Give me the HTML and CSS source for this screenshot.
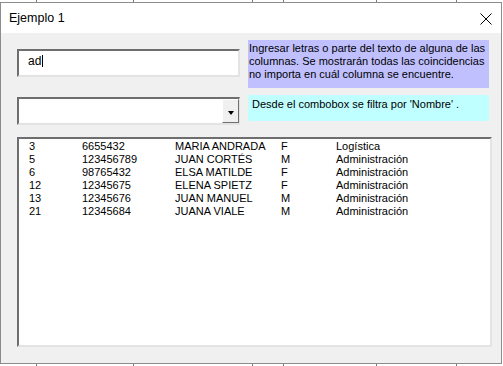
FILE: index.html
```html
<html>
<head>
<meta charset="utf-8">
<link rel="stylesheet" href="styles.css">
</head>
<body>
<div class="win">
  <div class="titlebar">
    <span class="title">Ejemplo 1</span>
    <svg class="close" width="12" height="12" viewBox="0 0 12 12">
      <path d="M0.5 0.5 L11.5 11.5 M11.5 0.5 L0.5 11.5" stroke="#000" stroke-width="1" fill="none"/>
    </svg>
  </div>
  <div class="client">
    <div class="row row1">
      <div class="textbox">ad<span class="caret"></span></div>
      <div class="note purple">Ingresar letras o parte del texto de alguna de las<br>columnas. Se mostrarán todas las coincidencias<br>no importa en cuál columna se encuentre.</div>
    </div>
    <div class="row row2">
      <div class="combo">
        <div class="combo-field"></div>
        <div class="combo-btn"><span class="arrow"></span></div>
      </div>
      <div class="note cyan">Desde el combobox se filtra por 'Nombre' .</div>
    </div>
    <div class="listbox">
      <div class="item"><span>3</span><span>6655432</span><span>MARIA ANDRADA</span><span>F</span><span>Logística</span></div>
      <div class="item"><span>5</span><span>123456789</span><span>JUAN CORTÉS</span><span>M</span><span>Administración</span></div>
      <div class="item"><span>6</span><span>98765432</span><span>ELSA MATILDE</span><span>F</span><span>Administración</span></div>
      <div class="item"><span>12</span><span>12345675</span><span>ELENA SPIETZ</span><span>F</span><span>Administración</span></div>
      <div class="item"><span>13</span><span>12345676</span><span>JUAN MANUEL</span><span>M</span><span>Administración</span></div>
      <div class="item"><span>21</span><span>12345684</span><span>JUANA VIALE</span><span>M</span><span>Administración</span></div>
    </div>
  </div>
</div>
</body>
</html>
```

FILE: styles.css
```css
body{
  margin:0;
  padding:2px 0 0 0;
  width:503px;
  height:366px;
  box-sizing:border-box;
  overflow:hidden;
  background-color:#fff;
  background-image:
    linear-gradient(to right, transparent 36px, #7a7a7a 36px, #7a7a7a 37px, transparent 37px,
      transparent 133px, #7a7a7a 133px, #7a7a7a 134px, transparent 134px,
      transparent 252px, #7a7a7a 252px, #7a7a7a 253px, transparent 253px,
      transparent 283px, #7a7a7a 283px, #7a7a7a 284px, transparent 284px,
      transparent 376px, #7a7a7a 376px, #7a7a7a 377px, transparent 377px,
      transparent 456px, #7a7a7a 456px, #7a7a7a 457px, transparent 457px);
  font-family:"Liberation Sans", Arial, sans-serif;
}
.win{
  width:502px;
  height:362px;
  box-sizing:border-box;
  border:1px solid #8c8c8c;
  background:#f0f0f0;
  display:flex;
  flex-direction:column;
}
.titlebar{
  height:30px;
  background:#fff;
  display:flex;
  align-items:center;
  justify-content:space-between;
  padding:0 9px 0 8px;
  flex-shrink:0;
}
.title{
  font-size:12.5px;
  color:#000;
}
.close{
  margin-top:1px;
}
.client{
  padding:7px 0 0 16px;
  font-size:11px;
}
.row{
  display:flex;
  gap:8px;
}
.row1{
  height:48px;
}
.row2{
  margin-top:7px;
  height:30px;
}
.textbox{
  width:223px;
  height:28px;
  margin-top:9px;
  box-sizing:border-box;
  background:#fff;
  border-top:2px solid #6e6e6e;
  border-left:2px solid #6e6e6e;
  border-right:2px solid #e3e3e3;
  border-bottom:2px solid #e3e3e3;
  padding:3px 0 0 9px;
  font-size:12px;
  color:#000;
  display:flex;
  align-items:flex-start;
}
.caret{
  display:inline-block;
  width:1px;
  height:12px;
  background:#000;
  margin:1px 0 0 1px;
}
.note{
  width:241px;
  box-sizing:border-box;
  color:#000;
  line-height:13px;
  white-space:nowrap;
}
.purple{
  height:48px;
  background:#c0c0ff;
  padding:2px 0 0 1px;
}
.cyan{
  height:26px;
  background:#c0ffff;
  padding:3px 0 0 4px;
}
.combo{
  width:223px;
  height:28px;
  margin-top:2px;
  box-sizing:border-box;
  background:#fff;
  border-top:2px solid #6e6e6e;
  border-left:2px solid #6e6e6e;
  border-right:1px solid #e3e3e3;
  border-bottom:2px solid #e3e3e3;
  display:flex;
}
.combo-field{
  flex:1;
}
.combo-btn{
  width:17px;
  box-sizing:border-box;
  background:#f0f0f0;
  border-top:1px solid #fff;
  border-left:1px solid #fff;
  border-right:1px solid #6e6e6e;
  border-bottom:1px solid #6e6e6e;
  display:flex;
  align-items:center;
  justify-content:center;
}
.arrow{
  width:0;
  height:0;
  border-left:3.5px solid transparent;
  border-right:3.5px solid transparent;
  border-top:4px solid #000;
  margin-top:3px;
}
.listbox{
  margin-top:12px;
  width:475px;
  height:210px;
  box-sizing:border-box;
  background:#fff;
  border-top:2px solid #6e6e6e;
  border-left:2px solid #6e6e6e;
  border-right:2px solid #e3e3e3;
  border-bottom:2px solid #e3e3e3;
  padding:1px 0 0 10px;
}
.item{
  display:grid;
  grid-template-columns:53px 93px 106px 55px auto;
  height:13px;
  line-height:13px;
  color:#000;
}
```
